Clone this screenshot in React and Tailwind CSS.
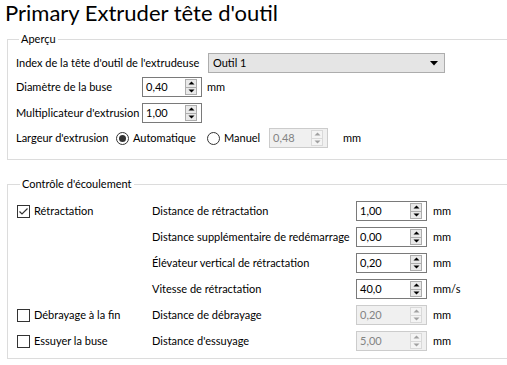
import React from 'react'

function Arrow({ up, color }) {
  return (
    <svg width="7" height="4" viewBox="0 0 7 4" className="block">
      {up ? <path d="M0.5 3.5 L3.5 0.5 L6.5 3.5 Z" fill={color} /> : <path d="M0.5 0.5 L3.5 3.5 L6.5 0.5 Z" fill={color} />}
    </svg>
  )
}

function Spin({ value, w = 'w-[60px]', disabled }) {
  return (
    <div className={`h-[20px] ${w} shrink-0 flex items-stretch border ${disabled ? 'border-[#cccccc] bg-[#f0f0f0] text-[#838383]' : 'border-[#7a7a7a] bg-white text-black'}`}>
      <div className="flex-1 flex items-center pl-[3px]">{value}</div>
      <div className="flex flex-col w-[12px] my-[1px] mr-[4px]">
        <div className={`flex-1 flex items-center justify-center border ${disabled ? 'border-[#d9d9d9] bg-[#f4f4f4]' : 'border-[#adadad] bg-[#e9e9e9]'}`}>
          <Arrow up color={disabled ? '#a0a0a0' : '#000'} />
        </div>
        <div className={`flex-1 flex items-center justify-center border border-t-0 ${disabled ? 'border-[#d9d9d9] bg-[#f4f4f4]' : 'border-[#adadad] bg-[#e9e9e9]'}`}>
          <Arrow color={disabled ? '#a0a0a0' : '#000'} />
        </div>
      </div>
    </div>
  )
}

function Check({ checked, label }) {
  return (
    <div className="flex items-center gap-[4px] whitespace-nowrap">
      <div className="w-[13px] h-[13px] shrink-0 border border-[#333333] bg-white flex items-center justify-center">
        {checked && (
          <svg width="11" height="11" viewBox="0 0 11 11">
            <path d="M1.5 5.5 L4 8 L9.5 2.5" stroke="#333" strokeWidth="1.2" fill="none" />
          </svg>
        )}
      </div>
      <span>{label}</span>
    </div>
  )
}

function Radio({ checked, label }) {
  return (
    <div className="flex items-center gap-[4px] whitespace-nowrap">
      <div className="w-[13px] h-[13px] shrink-0 rounded-full border border-[#333333] bg-white flex items-center justify-center">
        {checked && <div className="w-[7px] h-[7px] rounded-full bg-[#333333]" />}
      </div>
      <span>{label}</span>
    </div>
  )
}

function Group({ title, children, className = '' }) {
  return (
    <fieldset className={`ml-[7px] w-[520px] border border-[#dcdcdc] ${className}`}>
      <legend className="ml-[3px] px-[2px] leading-[16px]">{title}</legend>
      {children}
    </fieldset>
  )
}

const rows = [
  { label: 'Distance de rétractation', value: '1,00', unit: 'mm', check: { label: 'Rétractation', checked: true } },
  { label: 'Distance supplémentaire de redémarrage', value: '0,00', unit: 'mm' },
  { label: 'Élévateur vertical de rétractation', value: '0,20', unit: 'mm' },
  { label: 'Vitesse de rétractation', value: '40,0', unit: 'mm/s' },
  { label: 'Distance de débrayage', value: '0,20', unit: 'mm', disabled: true, check: { label: 'Débrayage à la fin', checked: false } },
  { label: "Distance d'essuyage", value: '5,00', unit: 'mm', disabled: true, check: { label: 'Essuyer la buse', checked: false } },
]

export default function App() {
  return (
    <div className="w-[507px] h-[365px] overflow-hidden bg-white text-black font-[Lato,sans-serif] text-[11px] leading-[16px] whitespace-nowrap">
      <h1 className="pl-[5px] text-[22px] leading-[25px]">Primary Extruder tête d'outil</h1>

      <Group title="Aperçu" className="mt-[6px] pl-[8px] pb-[11px]">
        <div className="flex flex-col">
          <div className="flex items-center mt-[6px]">
            <span className="w-[192px] shrink-0">Index de la tête d'outil de l'extrudeuse</span>
            <div className="w-[237px] h-[20px] shrink-0 flex items-center justify-between border border-[#adadad] bg-[#e5e5e5] pl-[4px] pr-[6px]">
              <span>Outil 1</span>
              <svg width="8" height="5" viewBox="0 0 8 5"><path d="M0 0 L8 0 L4 4.5 Z" fill="#000" /></svg>
            </div>
          </div>
          <div className="flex items-center mt-[4px]">
            <span className="w-[126px] shrink-0">Diamètre de la buse</span>
            <Spin value="0,40" />
            <span className="ml-[5px]">mm</span>
          </div>
          <div className="flex items-center mt-[6px]">
            <span className="w-[126px] shrink-0">Multiplicateur d'extrusion</span>
            <Spin value="1,00" />
          </div>
          <div className="flex items-center mt-[5px]">
            <span className="w-[100px] shrink-0">Largeur d'extrusion</span>
            <div className="w-[91px] shrink-0"><Radio checked label="Automatique" /></div>
            <div className="w-[62px] shrink-0"><Radio label="Manuel" /></div>
            <Spin value="0,48" w="w-[59px]" disabled />
            <span className="ml-[15px]">mm</span>
          </div>
        </div>
      </Group>

      <Group title="Contrôle d'écoulement" className="mt-[16px] pl-[9px] pb-[7px]">
        <div className="grid grid-cols-[135px_204px_71px_auto] gap-y-[6px] mt-[9px] items-center">
          {rows.map((r) => (
            <React.Fragment key={r.label}>
              <div>{r.check && <Check checked={r.check.checked} label={r.check.label} />}</div>
              <span>{r.label}</span>
              <Spin value={r.value} w="w-[71px]" disabled={r.disabled} />
              <span className="pl-[6px]">{r.unit}</span>
            </React.Fragment>
          ))}
        </div>
      </Group>
    </div>
  )
}
